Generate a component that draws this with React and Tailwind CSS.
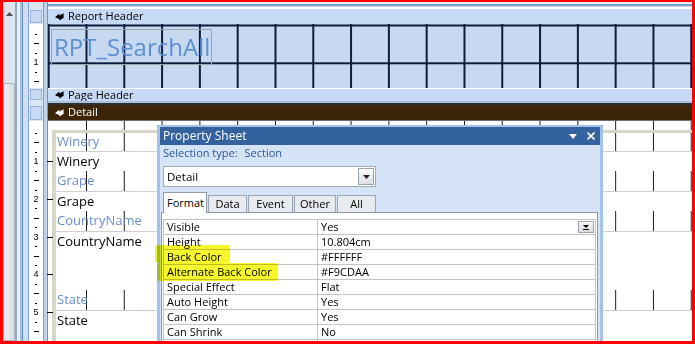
import React from "react";

const ui = "font-['Open_Sans',sans-serif]";

const properties = [
  ["Visible", "Yes"],
  ["Height", "10.804cm"],
  ["Back Color", "#FFFFFF"],
  ["Alternate Back Color", "#F9CDAA"],
  ["Special Effect", "Flat"],
  ["Auto Height", "Yes"],
  ["Can Grow", "Yes"],
  ["Can Shrink", "No"],
  ["", ""],
];

// ruler marks: one slot per quarter cm, digit on every 4th
const RulerMarks = ({ padClass, slots }) => {
  const marks = Array.from({ length: slots }, (_, i) => i + 1);
  return (
    <div className={`flex flex-col items-center ${padClass}`}>
      {marks.map((k) => (
        <div key={k} className="h-[9.45px] shrink-0 flex items-center justify-center">
          {k % 4 === 0 ? (
            <span className="text-[9px] leading-none font-['Liberation_Sans',sans-serif] text-black">
              {k / 4}
            </span>
          ) : k % 2 === 0 ? (
            <div className="w-[5px] h-px bg-black" />
          ) : (
            <div className="w-[2px] h-px bg-black" />
          )}
        </div>
      ))}
    </div>
  );
};

const SectionIcon = ({ light }) => (
  <svg width="9" height="8" viewBox="0 0 9 8" className={light ? "fill-white" : "fill-black"}>
    <path d="M0 4.2 L4.3 0.5 L4.3 2.4 L8.6 0.2 L8.6 4.8 L4.6 7.6 L4.3 5.9 Z" />
  </svg>
);

const Selector = ({ h }) => (
  <div className={`${h} shrink-0 px-px py-px bg-[#dbe6f4]`}>
    <div className="h-full bg-[#c7daf3] border border-[#98b3d8]" />
  </div>
);

const Label = ({ h, children }) => (
  <div className={`${h} shrink-0 pl-px flex items-center text-[#6b8fca]`}>{children}</div>
);

const TextBox = ({ h, children }) => (
  <div className={`${h} shrink-0 pl-px bg-white border-t border-[#cfcfcf] leading-[19px] text-black`}>
    {children}
  </div>
);

const Tab = ({ w, children }) => (
  <div className={`${w} h-[17px] bg-[#e7eaee] border border-b-0 border-[#9aa5b3] flex items-center justify-center text-[11px] text-black`}>
    {children}
  </div>
);

const PropertySheet = () => (
  <div className="absolute left-[154px] top-[123px] w-[446px] h-[240px] border-x-[3px] border-t-2 border-[#a3c2ea] flex flex-col bg-[#d4e3f5]">
    <div className="h-[18px] shrink-0 bg-[#33629f] flex items-center justify-between pl-[3px] pr-[5px]">
      <span className="text-[12px] text-white leading-none">Property Sheet</span>
      <div className="flex items-center gap-[10px]">
        <svg width="8" height="5" viewBox="0 0 8 5" className="fill-white">
          <path d="M0 0 H8 L4 5 Z" />
        </svg>
        <svg width="8" height="8" viewBox="0 0 8 8" className="stroke-white" strokeWidth="1.6">
          <path d="M0.5 0.5 L7.5 7.5 M7.5 0.5 L0.5 7.5" />
        </svg>
      </div>
    </div>

    <div className="h-[16px] pl-[3px] flex items-center text-[11px] text-[#2b5796]">
      <span>Selection type:</span>
      <span className="ml-[7px]">Section</span>
    </div>

    <div className="mt-[5px] ml-[3px] w-[213px] h-[21px] bg-white border border-[#a3aab4] flex items-center justify-between pl-[3px] pr-px">
      <span className="text-[11.5px] text-black">Detail</span>
      <div className="w-[16px] h-[17px] border border-[#9ba3ad] bg-[linear-gradient(#fbfbfb,#dcdfe3)] flex items-center justify-center">
        <svg width="7" height="4" viewBox="0 0 7 4" className="fill-[#222]">
          <path d="M0 0 H7 L3.5 4 Z" />
        </svg>
      </div>
    </div>

    <div className="mt-[4px] ml-[3px] flex items-end gap-px h-[21px]">
      <div className="w-[44px] h-[21px] -mb-px bg-white border border-b-0 border-[#8d99a9] flex items-center pl-[3px] text-[11px] text-black relative z-10">
        Format
      </div>
      <Tab w="w-[39px]">Data</Tab>
      <Tab w="w-[45px]">Event</Tab>
      <Tab w="w-[42px]">Other</Tab>
      <Tab w="w-[39px]">All</Tab>
    </div>

    <div className="ml-px w-[437px] flex-1 bg-white border border-[#8d99a9] pt-[6px] px-px">
      <div className="border-t border-l border-r border-[#c4c4c4] text-[11px] text-black">
        {properties.map(([name, value], i) => (
          <div key={i} className="h-[15px] flex border-b border-[#c4c4c4]">
            <div className="w-[154px] shrink-0 border-r border-[#c4c4c4] pl-[3px] leading-[14px]">{name}</div>
            <div className="flex-1 pl-[3px] leading-[14px] flex justify-between">
              <span>{value}</span>
              {i === 0 && (
                <div className="w-[16px] h-[12px] mt-px mr-px border border-[#9ba3ad] bg-[linear-gradient(#f8f8f8,#d8dbdf)] flex flex-col items-center justify-center gap-px">
                  <svg width="6" height="3" viewBox="0 0 6 3" className="fill-black">
                    <path d="M0 0 H6 L3 3 Z" />
                  </svg>
                  <div className="w-[6px] h-px bg-black" />
                </div>
              )}
            </div>
          </div>
        ))}
      </div>
    </div>
  </div>
);

export default function App() {
  return (
    <div className={`relative w-[695px] h-[344px] overflow-hidden border-[3px] border-t-2 border-[#ff0000] bg-white flex ${ui}`}>
      {/* vertical scrollbar */}
      <div className="w-[12px] shrink-0 bg-[#dde5ef] flex flex-col">
        <div className="h-[81px] shrink-0 flex justify-center pt-[10px]">
          <svg width="7" height="4" viewBox="0 0 7 4" className="fill-[#4a4f57]">
            <path d="M0 4 L3.5 0 L7 4 Z" />
          </svg>
        </div>
        <div className="flex-1 border border-[#aab5c4] rounded-[2px] bg-[linear-gradient(to_right,#eef1f5,#d7dde6)]" />
      </div>

      {/* window border stripes */}
      <div className="w-[14px] shrink-0 flex">
        <div className="w-[2px] bg-[#95aac6]" />
        <div className="w-[3px] bg-[#e6eef8]" />
        <div className="w-[2px] bg-[#aac2e3]" />
        <div className="w-px bg-[#6c8dbf]" />
        <div className="w-[5px] bg-[#cfdff3]" />
        <div className="w-px bg-[#88a5cf]" />
      </div>

      {/* vertical ruler */}
      <div className="w-[15px] shrink-0 border-r border-[#7f9dc9] flex flex-col overflow-hidden">
        <div className="h-[7px] shrink-0 bg-[#dbe6f4]" />
        <Selector h="h-[15px]" />
        <div className="h-[64px] shrink-0 bg-white overflow-hidden">
          <RulerMarks padClass="pt-[5.7px]" slots={6} />
        </div>
        <Selector h="h-[13px]" />
        <div className="h-[4px] shrink-0 bg-[#dbe6f4]" />
        <Selector h="h-[16px]" />
        <div className="flex-1 bg-white overflow-hidden">
          <RulerMarks padClass="pt-[7.7px]" slots={22} />
        </div>
      </div>

      <div className="w-[4px] shrink-0 bg-[#bfd3ed] border-r border-[#7093c4]" />

      {/* report design surface */}
      <div className="flex-1 flex flex-col min-w-0">
        <div className="flex flex-col shrink-0">
          <div className="h-[2px] bg-[#e4edf8]" />
          <div className="h-[2px] bg-[#7d9dce]" />
          <div className="h-px bg-[#c4d6ee]" />
          <div className="h-[2px] bg-white" />
        </div>

        <div className="h-[15px] shrink-0 bg-[#c6daf6] flex items-center pl-[7px] gap-[4px] text-[11px] text-black">
          <SectionIcon />
          <span>Report Header</span>
        </div>

        <div className="h-[64px] shrink-0 bg-[#c6d9f1] [background-image:linear-gradient(to_right,#0d1c3b_1.5px,transparent_1.5px),linear-gradient(to_bottom,#0d1c3b_1.5px,transparent_1.5px)] [background-size:37.8px_37.8px] [background-position:37.5px_0.5px] pt-[5px] pl-[3px]">
          <div className="w-[161px] h-[36px] border border-[#a1a5ab] flex items-center pl-[2px] text-[24px] leading-none text-[#5f8fd3]">
            RPT_SearchAll
          </div>
        </div>

        <div className="h-[13px] shrink-0 bg-[#c6daf6] border-t border-white flex items-center pl-[7px] gap-[4px] text-[11px] text-black">
          <SectionIcon />
          <span>Page Header</span>
        </div>
        <div className="h-[2px] shrink-0 bg-[#a9c1e0]" />
        <div className="h-[2px] shrink-0 bg-[#2e3033]" />

        <div className="h-[16px] shrink-0 bg-[#3c2508] border-b border-[#6f6f6f] flex items-center pl-[7px] gap-[4px] text-[11px] text-white">
          <SectionIcon light />
          <span>Detail</span>
        </div>

        <div className="flex-1 flex min-h-0">
          <div className="w-[4px] shrink-0 bg-white flex flex-col pt-[40px] relative z-10">
            {[0, 1, 2, 3, 4].map((i) => (
              <div key={i} className="h-[37.8px] shrink-0">
                <div className="w-[6px] h-px bg-black -ml-px" />
              </div>
            ))}
          </div>
          <div className="flex-1 flex flex-col bg-white [background-image:linear-gradient(to_right,#1c1c1c_1px,transparent_1px)] [background-size:37.8px_100%] [background-position:34px_0]">
            <div className="h-[9px] shrink-0" />
            <div className="flex-1 border-l-4 border-t-[3px] border-[#d8d4c6] flex flex-col text-[13px]">
              <Label h="h-[18px]">Winery</Label>
              <TextBox h="h-[20px]">Winery</TextBox>
              <Label h="h-[20px]">Grape</Label>
              <TextBox h="h-[20px]">Grape</TextBox>
              <Label h="h-[20px]">CountryName</Label>
              <TextBox h="h-[59px]">CountryName</TextBox>
              <Label h="h-[20px]">State</Label>
              <TextBox h="h-[40px]">State</TextBox>
            </div>
          </div>
        </div>
      </div>

      <PropertySheet />

      {/* highlighter marks */}
      <div className="absolute left-[152px] top-[243px] w-[75px] h-[18px] rounded-[3px] bg-[#f6f62c] mix-blend-multiply" />
      <div className="absolute left-[154px] top-[261px] w-[121px] h-[18px] rounded-[3px] bg-[#f6f62c] mix-blend-multiply" />
    </div>
  );
}
